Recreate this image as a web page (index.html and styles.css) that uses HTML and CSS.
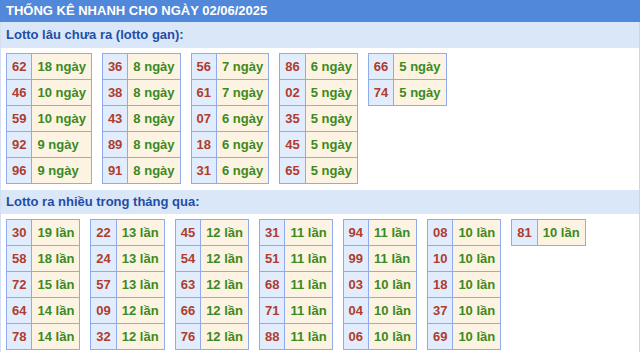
FILE: index.html
```html
<!DOCTYPE html>
<html lang="vi">
<head>
<meta charset="utf-8">
<title>Thống kê nhanh</title>
<link rel="stylesheet" href="styles.css">
</head>
<body>
<div class="page">
  <div class="main-title">THỐNG KÊ NHANH CHO NGÀY 02/06/2025</div>
  <div class="box">
    <div class="sec-title first">Lotto lâu chưa ra (lotto gan):</div>
    <div class="tables">
      <table><tbody>
        <tr><td class="num">62</td><td class="val">18 ngày</td></tr>
        <tr><td class="num">46</td><td class="val">10 ngày</td></tr>
        <tr><td class="num">59</td><td class="val">10 ngày</td></tr>
        <tr><td class="num">92</td><td class="val">9 ngày</td></tr>
        <tr><td class="num">96</td><td class="val">9 ngày</td></tr>
      </tbody></table>
      <table><tbody>
        <tr><td class="num">36</td><td class="val">8 ngày</td></tr>
        <tr><td class="num">38</td><td class="val">8 ngày</td></tr>
        <tr><td class="num">43</td><td class="val">8 ngày</td></tr>
        <tr><td class="num">89</td><td class="val">8 ngày</td></tr>
        <tr><td class="num">91</td><td class="val">8 ngày</td></tr>
      </tbody></table>
      <table><tbody>
        <tr><td class="num">56</td><td class="val">7 ngày</td></tr>
        <tr><td class="num">61</td><td class="val">7 ngày</td></tr>
        <tr><td class="num">07</td><td class="val">6 ngày</td></tr>
        <tr><td class="num">18</td><td class="val">6 ngày</td></tr>
        <tr><td class="num">31</td><td class="val">6 ngày</td></tr>
      </tbody></table>
      <table><tbody>
        <tr><td class="num">86</td><td class="val">6 ngày</td></tr>
        <tr><td class="num">02</td><td class="val">5 ngày</td></tr>
        <tr><td class="num">35</td><td class="val">5 ngày</td></tr>
        <tr><td class="num">45</td><td class="val">5 ngày</td></tr>
        <tr><td class="num">65</td><td class="val">5 ngày</td></tr>
      </tbody></table>
      <table><tbody>
        <tr><td class="num">66</td><td class="val">5 ngày</td></tr>
        <tr><td class="num">74</td><td class="val">5 ngày</td></tr>
      </tbody></table>
    </div>
    <div class="sec-title">Lotto ra nhiều trong tháng qua:</div>
    <div class="tables">
      <table><tbody>
        <tr><td class="num">30</td><td class="val">19 lần</td></tr>
        <tr><td class="num">58</td><td class="val">18 lần</td></tr>
        <tr><td class="num">72</td><td class="val">15 lần</td></tr>
        <tr><td class="num">64</td><td class="val">14 lần</td></tr>
        <tr><td class="num">78</td><td class="val">14 lần</td></tr>
      </tbody></table>
      <table><tbody>
        <tr><td class="num">22</td><td class="val">13 lần</td></tr>
        <tr><td class="num">24</td><td class="val">13 lần</td></tr>
        <tr><td class="num">57</td><td class="val">13 lần</td></tr>
        <tr><td class="num">09</td><td class="val">12 lần</td></tr>
        <tr><td class="num">32</td><td class="val">12 lần</td></tr>
      </tbody></table>
      <table><tbody>
        <tr><td class="num">45</td><td class="val">12 lần</td></tr>
        <tr><td class="num">54</td><td class="val">12 lần</td></tr>
        <tr><td class="num">63</td><td class="val">12 lần</td></tr>
        <tr><td class="num">66</td><td class="val">12 lần</td></tr>
        <tr><td class="num">76</td><td class="val">12 lần</td></tr>
      </tbody></table>
      <table><tbody>
        <tr><td class="num">31</td><td class="val">11 lần</td></tr>
        <tr><td class="num">51</td><td class="val">11 lần</td></tr>
        <tr><td class="num">68</td><td class="val">11 lần</td></tr>
        <tr><td class="num">71</td><td class="val">11 lần</td></tr>
        <tr><td class="num">88</td><td class="val">11 lần</td></tr>
      </tbody></table>
      <table><tbody>
        <tr><td class="num">94</td><td class="val">11 lần</td></tr>
        <tr><td class="num">99</td><td class="val">11 lần</td></tr>
        <tr><td class="num">03</td><td class="val">10 lần</td></tr>
        <tr><td class="num">04</td><td class="val">10 lần</td></tr>
        <tr><td class="num">06</td><td class="val">10 lần</td></tr>
      </tbody></table>
      <table><tbody>
        <tr><td class="num">08</td><td class="val">10 lần</td></tr>
        <tr><td class="num">10</td><td class="val">10 lần</td></tr>
        <tr><td class="num">18</td><td class="val">10 lần</td></tr>
        <tr><td class="num">37</td><td class="val">10 lần</td></tr>
        <tr><td class="num">69</td><td class="val">10 lần</td></tr>
      </tbody></table>
      <table><tbody>
        <tr><td class="num">81</td><td class="val">10 lần</td></tr>
      </tbody></table>
    </div>
  </div>
</div>
</body>
</html>
```

FILE: styles.css
```css
html, body {
  margin: 0;
  padding: 0;
  background: #ffffff;
}

body {
  font-family: "Liberation Sans", Arial, sans-serif;
  font-size: 13px;
  font-weight: bold;
}

.page {
  width: 640px;
}

.main-title {
  background: #5188d9;
  color: #ffffff;
  height: 22px;
  line-height: 22px;
  padding-left: 6px;
  white-space: nowrap;
}

.box {
  border-left: 1px solid #d3dff0;
  border-right: 1px solid #c9d6ea;
}

.sec-title {
  background: #dae7f9;
  color: #1f4ea8;
  line-height: 24px;
  padding-left: 5px;
}

.sec-title.first {
  line-height: 26px;
}

.tables {
  display: flex;
  align-items: flex-start;
  gap: 10px;
  padding: 5px 5px 6px;
}

table {
  border-collapse: collapse;
}

td {
  border: 1px solid #8fabee;
  line-height: 25px;
  padding: 0 5px;
  text-align: left;
  white-space: nowrap;
}

td.num {
  background: #e1edfc;
  color: #b03c2c;
}

td.val {
  background: #fdf3e2;
  color: #3b8a22;
}
```
